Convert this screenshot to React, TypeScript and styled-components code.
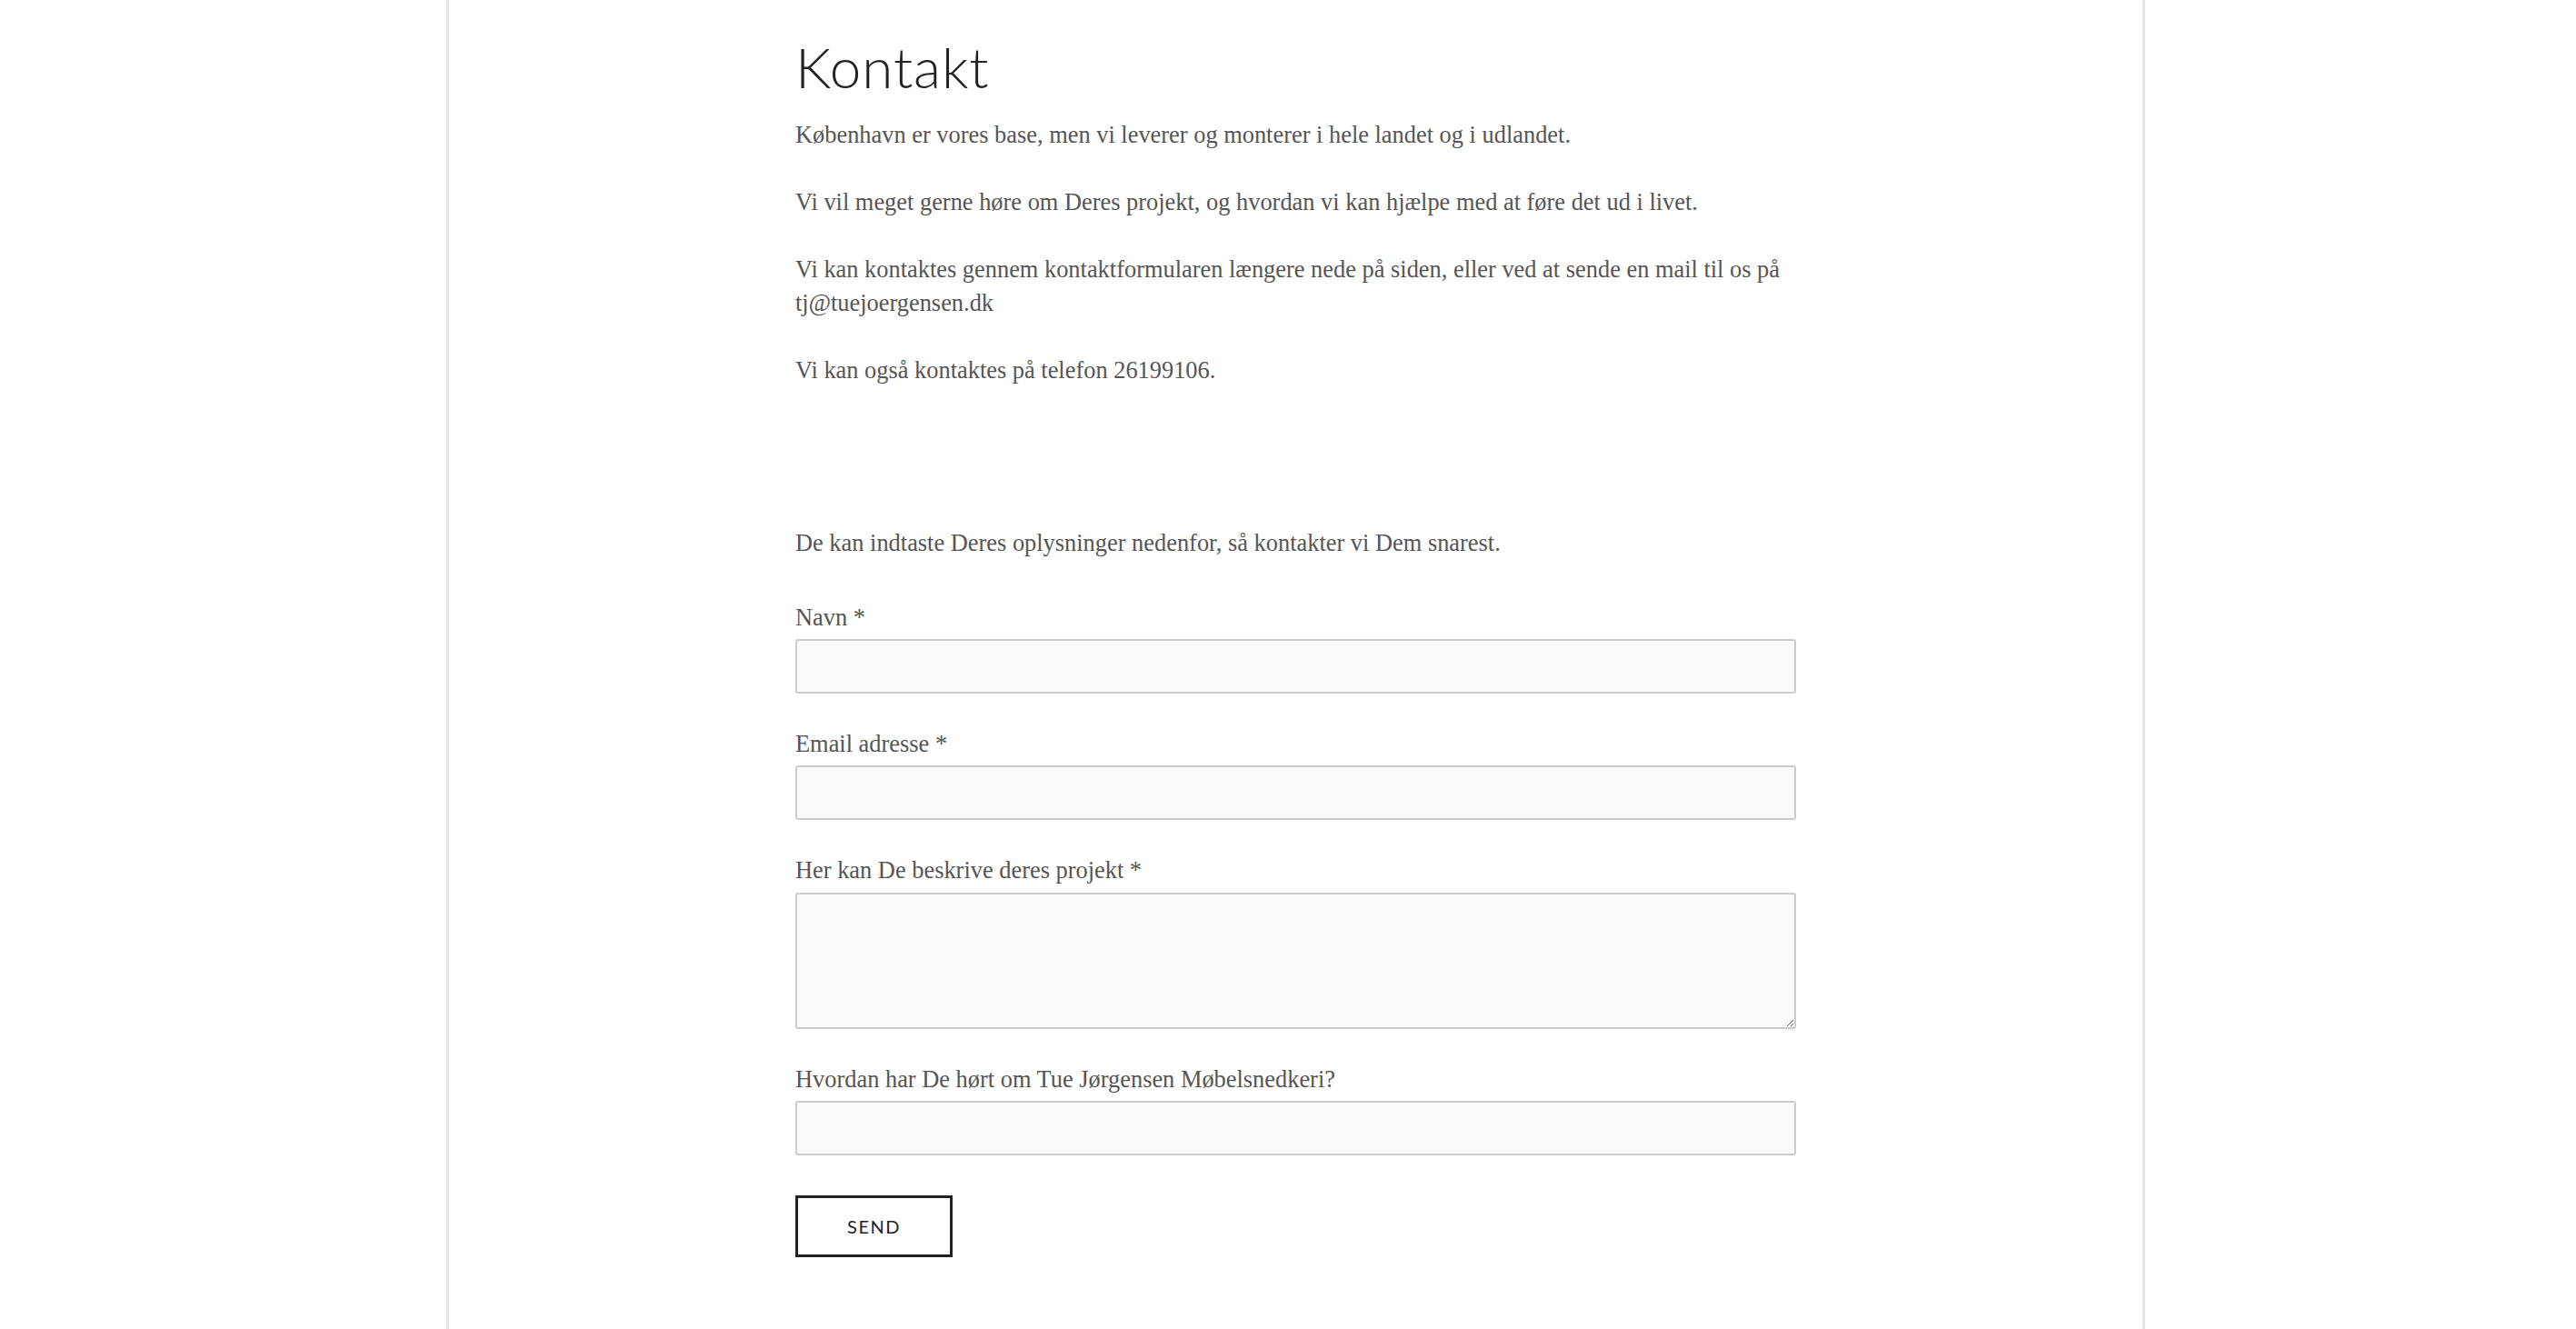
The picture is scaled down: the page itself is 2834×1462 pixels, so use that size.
import styled, { createGlobalStyle } from "styled-components";

const GlobalStyle = createGlobalStyle`
  html, body {
    margin: 0;
    padding: 0;
    background: #ffffff;
  }
  * {
    box-sizing: border-box;
  }
`;

const Page = styled.div`
  min-height: 100vh;
  padding-left: 491px;
  display: flex;
`;

const Card = styled.main`
  width: 1869px;
  min-height: 100vh;
  border-left: 3px solid #e6e6e6;
  border-right: 3px solid #e6e6e6;
  display: flex;
  justify-content: center;
`;

const Column = styled.div`
  width: 1101px;
  padding-top: 36px;
  display: flex;
  flex-direction: column;
`;

const Heading = styled.h1`
  margin: 0 0 20px;
  font-family: Lato, "Open Sans", sans-serif;
  font-weight: 300;
  font-size: 62px;
  line-height: 74px;
  color: #222222;
  letter-spacing: 0.9px;
`;

const Text = styled.p`
  margin: 0 0 37px;
  font-family: "Liberation Serif", "DejaVu Serif", serif;
  font-size: 26.4px;
  line-height: 37px;
  color: #555555;
`;

const Form = styled.form`
  margin-top: 116px;
  display: flex;
  flex-direction: column;
  gap: 37px;
`;

const Intro = styled(Text)`
  margin: 0 0 8px;
`;

const Field = styled.label`
  display: flex;
  flex-direction: column;
  gap: 5px;
`;

const LabelText = styled.span`
  font-family: "Liberation Serif", "DejaVu Serif", serif;
  font-size: 26.4px;
  line-height: 37px;
  color: #555555;
`;

const Input = styled.input`
  width: 100%;
  height: 60px;
  border: 2px solid #cccccc;
  border-radius: 3px;
  background: #fafafa;
  padding: 0 14px;
  font-family: "Liberation Serif", serif;
  font-size: 22px;
  outline: none;
`;

const TextArea = styled.textarea`
  width: 100%;
  height: 150px;
  margin-top: 1px;
  border: 2px solid #cccccc;
  border-radius: 3px;
  background: #fafafa;
  padding: 12px 14px;
  font-family: "Liberation Serif", serif;
  font-size: 22px;
  outline: none;
  display: block;
`;

const SendButton = styled.button`
  align-self: flex-start;
  margin-top: 7px;
  width: 173px;
  height: 68px;
  border: 3px solid #222222;
  background: #ffffff;
  color: #222222;
  font-family: Lato, "Open Sans", sans-serif;
  font-size: 20px;
  font-weight: 400;
  letter-spacing: 1.5px;
  text-transform: uppercase;
  cursor: pointer;
`;

const fields = [
  { label: "Navn *", kind: "input" },
  { label: "Email adresse *", kind: "input" },
  { label: "Her kan De beskrive deres projekt *", kind: "textarea" },
  { label: "Hvordan har De hørt om Tue Jørgensen Møbelsnedkeri?", kind: "input" },
];

export default function App() {
  return (
    <>
      <GlobalStyle />
      <Page>
        <Card>
          <Column>
            <Heading>Kontakt</Heading>
            <Text>København er vores base, men vi leverer og monterer i hele landet og i udlandet.</Text>
            <Text>Vi vil meget gerne høre om Deres projekt, og hvordan vi kan hjælpe med at føre det ud i livet.</Text>
            <Text>
              Vi kan kontaktes gennem kontaktformularen længere nede på siden, eller ved at sende en mail til os på
              <br />
              tj@tuejoergensen.dk
            </Text>
            <Text>Vi kan også kontaktes på telefon 26199106.</Text>

            <Form onSubmit={(e) => e.preventDefault()}>
              <Intro>De kan indtaste Deres oplysninger nedenfor, så kontakter vi Dem snarest.</Intro>
              {fields.map((f) => (
                <Field key={f.label}>
                  <LabelText>{f.label}</LabelText>
                  {f.kind === "textarea" ? <TextArea /> : <Input type="text" />}
                </Field>
              ))}
              <SendButton type="submit">Send</SendButton>
            </Form>
          </Column>
        </Card>
      </Page>
    </>
  );
}
